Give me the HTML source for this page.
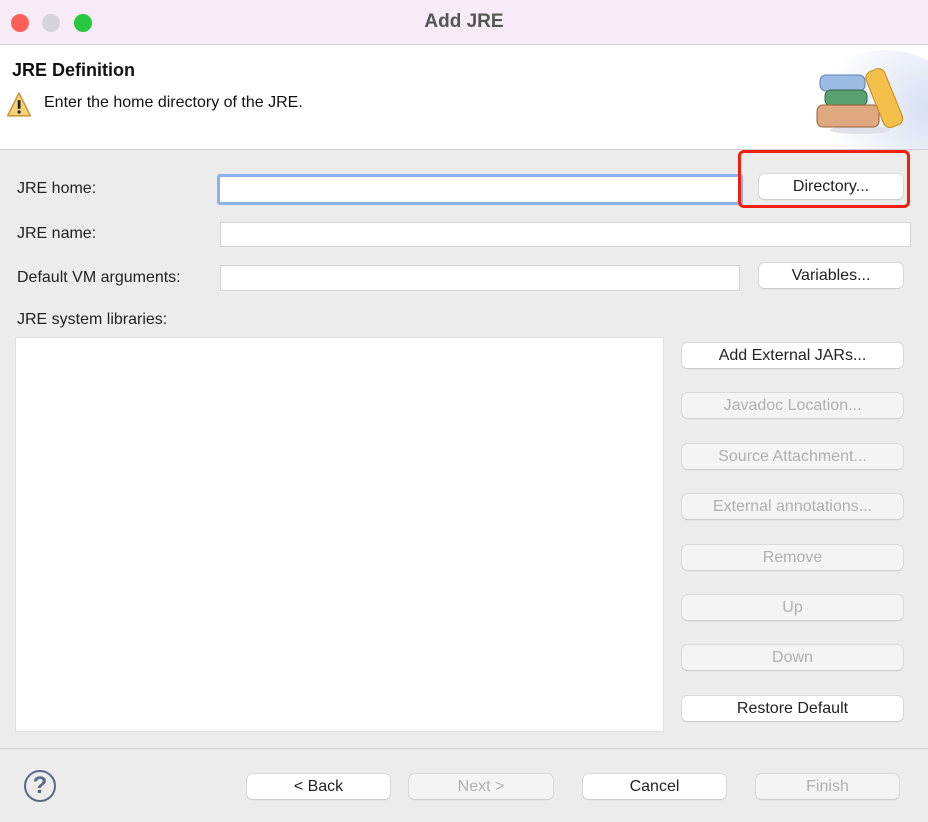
<!DOCTYPE html>
<html><head><style>
*{box-sizing:border-box;margin:0;padding:0}
body{width:928px;height:822px;background:#ececec;font-family:"Liberation Sans",sans-serif;font-size:16px;color:#222;position:relative;overflow:hidden}
.a{position:absolute}
.tb{left:0;top:0;width:928px;height:45px;background:#f6ebf6;border-bottom:1px solid #d8d0d8}
.dot{width:18px;height:18px;border-radius:50%;top:14px}
.hdr{left:0;top:45px;width:928px;height:105px;background:#fff;border-bottom:1px solid #d0d0d0;overflow:hidden}
.btn{position:absolute;left:682px;width:221px;height:25px;background:#fff;border-radius:5px;box-shadow:0 0 0 0.5px #c8c8c8,0 1px 1px rgba(0,0,0,.15);text-align:center;line-height:25px;font-size:16px;color:#222}
.dis{background:#f4f4f4;color:#b0b0b0}
.inp{position:absolute;background:#fff;border:1px solid #d4d4d4}
.lbl{position:absolute;left:17px;font-size:16px}
</style></head><body>
<div class="a tb"></div>
<div class="a dot" style="left:11px;background:#fe5f57"></div>
<div class="a dot" style="left:42px;background:#d8d2da"></div>
<div class="a dot" style="left:74px;background:#28c840"></div>
<div class="a" style="left:0;width:928px;top:11px;text-align:center;font-weight:bold;font-size:19px;color:#555">Add JRE</div>
<div class="a hdr"><div class="a" style="left:805px;top:5px;width:160px;height:130px;border-radius:50%;background:radial-gradient(circle at 75% 45%,#d8e0f4,#fff 70%)"></div></div>
<div class="a" style="left:12px;top:60px;font-weight:bold;font-size:18px;color:#111">JRE Definition</div>
<svg class="a" style="left:6px;top:91px" width="26" height="28" viewBox="0 0 24 26"><path d="M12 2 L22.5 23 H1.5 Z" fill="#f8d27a" stroke="#c89a3a" stroke-width="1.5" stroke-linejoin="round"/><rect x="10.8" y="8.5" width="2.6" height="8" fill="#222"/><circle cx="12.1" cy="19.5" r="1.5" fill="#222"/></svg>
<div class="a" style="left:44px;top:94px;font-size:16px;color:#111">Enter the home directory of the JRE.</div>
<svg class="a" style="left:815px;top:62px" width="95" height="72" viewBox="0 0 95 72">
<ellipse cx="45" cy="68" rx="30" ry="4" fill="#e0e0e8"/>
<rect x="5" y="13" width="45" height="16" rx="6" fill="#9cbce4" stroke="#5a80b8"/>
<rect x="10" y="28" width="42" height="16" rx="6" fill="#58a070" stroke="#2e6a44"/>
<rect x="2" y="43" width="62" height="22" rx="6" fill="#e0a880" stroke="#98603a"/>
<g transform="rotate(-22 70 38)"><rect x="60" y="6" width="20" height="60" rx="7" fill="#f5c04a" stroke="#c08a18"/></g>
</svg>
<div class="lbl" style="top:180px">JRE home:</div>
<div class="inp" style="left:217px;top:174px;width:526px;height:31px;border:3px solid #8fb0ee;border-radius:3px"></div>
<div class="btn" style="left:759px;top:174px;width:144px">Directory...</div>
<div class="a" style="left:738px;top:150px;width:172px;height:58px;border:3px solid #f02010;border-radius:6px"></div>
<div class="lbl" style="top:225px">JRE name:</div>
<div class="inp" style="left:220px;top:222px;width:691px;height:25px"></div>
<div class="lbl" style="top:269px">Default VM arguments:</div>
<div class="inp" style="left:220px;top:265px;width:520px;height:26px"></div>
<div class="btn" style="left:759px;top:263px;width:144px">Variables...</div>
<div class="lbl" style="top:311px">JRE system libraries:</div>
<div class="inp" style="left:15px;top:337px;width:649px;height:395px;border-color:#e0e0e0"></div>
<div class="btn" style="top:343px">Add External JARs...</div>
<div class="btn dis" style="top:393px">Javadoc Location...</div>
<div class="btn dis" style="top:444px">Source Attachment...</div>
<div class="btn dis" style="top:494px">External annotations...</div>
<div class="btn dis" style="top:545px">Remove</div>
<div class="btn dis" style="top:595px">Up</div>
<div class="btn dis" style="top:645px">Down</div>
<div class="btn" style="top:696px">Restore Default</div>
<div class="a" style="left:0;top:748px;width:928px;height:1px;background:#d4d4d4"></div>
<div class="a" style="left:24px;top:770px;width:32px;height:32px;border:2px solid #5a6a88;border-radius:50%;text-align:center;line-height:28px;font-size:24px;font-weight:bold;color:#5a6a88">?</div>
<div class="btn" style="left:247px;top:774px;width:143px">&lt; Back</div>
<div class="btn dis" style="left:409px;top:774px;width:144px">Next &gt;</div>
<div class="btn" style="left:583px;top:774px;width:143px">Cancel</div>
<div class="btn dis" style="left:756px;top:774px;width:143px">Finish</div>
</body></html>
